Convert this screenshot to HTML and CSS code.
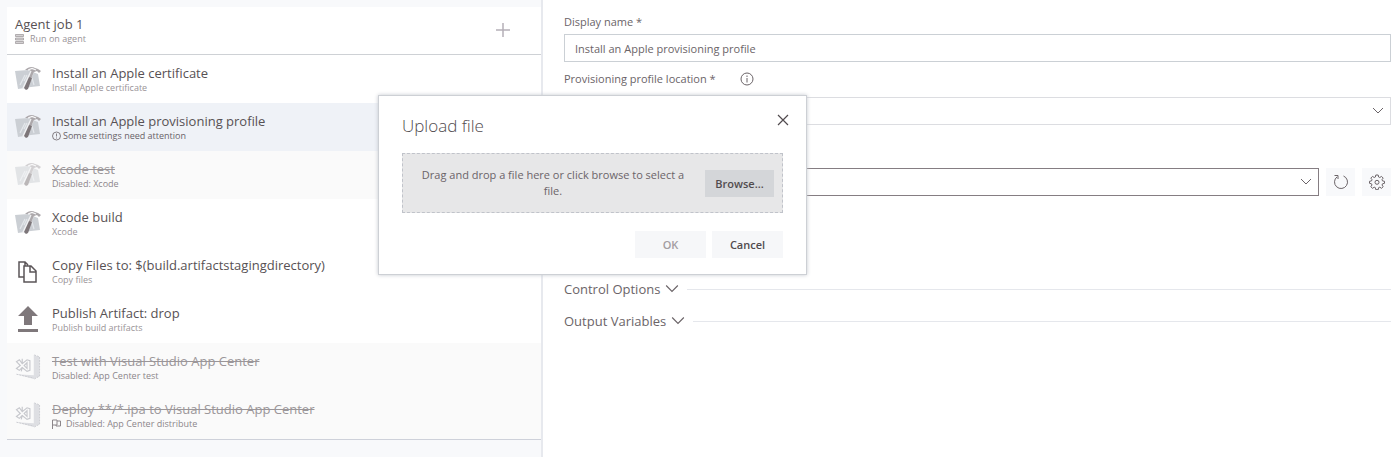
FILE: index.html
```html
<!DOCTYPE html>
<html lang="en">
<head>
<meta charset="utf-8">
<meta name="viewport" content="width=device-width, initial-scale=1">
<title>Agent job 1</title>
<link rel="stylesheet" href="styles.css">
</head>
<body>
<svg class="defs" aria-hidden="true">
  <symbol id="xcode" viewBox="0 0 26 26">
    <path d="M0 5 13 4 23 8 25 20 16 21 3 23Z" fill="#cbcfd4"/>
    <path d="M5 19 10 9M12 9 9 15M19 19 17 12" fill="none" stroke="#e4e7eb" stroke-width="1.200"/>
    <path d="M18 4 9 23" stroke="#f1f2f4" stroke-width="4"/>
    <path d="M18 5 15 12" stroke="#aca8ab" stroke-width="2.500"/>
    <path d="M14 11 17 12 13 23 11 24 9 22Z" fill="#7d7679"/>
    <path d="M10 4C13 1 17 0 20 2L23 3 26 5 24 7 22 5 19 6 16 5 14 4Z" fill="#aca8ab"/>
    <path d="M13 4 17 2.500 21 4" fill="none" stroke="#f8f8f9" stroke-width="1.200"/>
  </symbol>
  <symbol id="studio" viewBox="0 0 26 27">
    <path d="M19 1 25 3V23L19 26 1 21 19 22Z" fill="#dedfe3"/>
    <path d="M19.500 1 25 3V23L19.500 26M1 21 19 25" fill="none" stroke="#cbccd1" stroke-dasharray="2 1"/>
    <path d="M1 8 4 6 7 10 12 6 15 7V17L12 18 7 14 4 17 1 15 5 12ZM12 9 9 12 12 15ZM7 5V10M7 14 6 18" fill="none" stroke="#c7c8cd" stroke-width="1.200"/>
  </symbol>
  <symbol id="chevron" viewBox="0 0 12 12">
    <path d="M1 3 6 8 11 3" fill="none" stroke="currentColor"/>
  </symbol>
</svg>
<main class="layout">
  <section class="tasks">
    <div class="card">
      <header class="job">
        <div class="text">
          <h1 class="name">Agent job 1</h1>
          <p class="note"><svg class="mini server" viewBox="0 0 9 10" aria-hidden="true"><path d="M.5.5h8v2h-8zM.5 4h8v2h-8zM.5 7.500h8v2h-8z" fill="#d4d1d3" stroke="#999497" stroke-width=".7"/></svg>Run on agent</p>
        </div>
        <button class="add" aria-label="Add a task"><svg viewBox="0 0 16 16"><path d="M8 1v14M1 8h14" stroke="currentColor" stroke-width="1.500" fill="none"/></svg></button>
      </header>
      <ul class="list">
        <li class="task"><svg class="icon"><use href="#xcode"/></svg><div class="text"><h2 class="name">Install an Apple certificate</h2><p class="note">Install Apple certificate</p></div></li>
        <li class="task selected"><svg class="icon"><use href="#xcode"/></svg><div class="text"><h2 class="name">Install an Apple provisioning profile</h2><p class="note"><svg class="mini alert" viewBox="0 0 9 9" aria-hidden="true"><circle cx="4.500" cy="4.500" r="4" fill="none" stroke="currentColor" stroke-width=".8"/><path d="M4.500 2v3M4.500 6v1" stroke="currentColor" stroke-width=".8"/></svg>Some settings need attention</p></div></li>
        <li class="task disabled"><svg class="icon faded"><use href="#xcode"/></svg><div class="text"><h2 class="name">Xcode test</h2><p class="note">Disabled: Xcode</p></div></li>
        <li class="task"><svg class="icon"><use href="#xcode"/></svg><div class="text"><h2 class="name">Xcode build</h2><p class="note">Xcode</p></div></li>
        <li class="task"><svg class="icon" viewBox="0 0 26 26"><path d="M9 19H4V4h6l3 3M9 8h7l5 5v11H9zM15 8v6h6M10 4v4" fill="none" stroke="#5b5558" stroke-width="1.500"/></svg><div class="text"><h2 class="name">Copy Files to: $(build.artifactstagingdirectory)</h2><p class="note">Copy files</p></div></li>
        <li class="task"><svg class="icon" viewBox="0 0 26 26"><path d="M13 0 23 10H17V19H9V10H3ZM3 23H23V26H3Z" fill="#7f787b"/></svg><div class="text"><h2 class="name">Publish Artifact: drop</h2><p class="note">Publish build artifacts</p></div></li>
        <li class="task disabled"><svg class="icon"><use href="#studio"/></svg><div class="text"><h2 class="name">Test with Visual Studio App Center</h2><p class="note">Disabled: App Center test</p></div></li>
        <li class="task disabled"><svg class="icon"><use href="#studio"/></svg><div class="text"><h2 class="name">Deploy **/*.ipa to Visual Studio App Center</h2><p class="note"><svg class="mini flag" viewBox="0 0 9 10" aria-hidden="true"><path d="M.5 10V1H5V6H.5M5 2H8.500V7H4V6" fill="none" stroke="currentColor"/></svg>Disabled: App Center distribute</p></div></li>
      </ul>
    </div>
  </section>

  <section class="details">
    <label class="label" for="display-name">Display name *</label>
    <input class="field" id="display-name" type="text" value="Install an Apple provisioning profile">
    <div class="label-row">
      <label class="label" for="location">Provisioning profile location *</label>
      <svg class="info" viewBox="0 0 14 14" aria-hidden="true"><circle cx="7" cy="7" r="6" fill="none" stroke="currentColor"/><path d="M7 3.500V5M7 6v4.500" stroke="currentColor"/></svg>
    </div>
    <div class="picker">
      <select class="select" id="location"><option></option></select>
      <svg class="arrow"><use href="#chevron"/></svg>
    </div>
    <div class="file-row">
      <div class="picker">
        <select class="select strong" aria-label="Profile file"><option></option></select>
        <svg class="arrow"><use href="#chevron"/></svg>
      </div>
      <button class="tool" aria-label="Refresh"><svg viewBox="0 0 16 16"><path d="M10.500 2A6.500 6.500 0 1 1 4 2.900M1.500 1.500H5V5" fill="none" stroke="currentColor"/></svg></button>
      <button class="tool" aria-label="Settings"><svg viewBox="0 0 16 16"><path d="M6.800 1h2.400l.4 2 1.200.5 1.700-1.100 1.700 1.700-1.200 1.600.5 1.200 2 .4v2l-2 .5-.5 1.200 1.200 1.700-1.700 1.600-1.700-1.100-1.200.5-.4 2H6.800l-.4-2-1.200-.5-1.700 1.100-1.700-1.600L3 11l-.5-1.200-2-.5v-2l2-.4L3 5.700 1.800 4.100l1.700-1.700 1.700 1.100L6.400 3z" fill="none" stroke="currentColor"/><circle cx="8" cy="8.300" r="2" fill="none" stroke="currentColor"/></svg></button>
    </div>
    <div class="groups">
      <button class="group">Control Options<svg class="chevron"><use href="#chevron"/></svg></button>
      <button class="group">Output Variables<svg class="chevron"><use href="#chevron"/></svg></button>
    </div>
  </section>
</main>

<div class="dialog" role="dialog" aria-labelledby="dialog-title">
  <header class="dialog-head">
    <h2 class="dialog-title" id="dialog-title">Upload file</h2>
    <button class="close" aria-label="Close"><svg viewBox="0 0 12 12"><path d="M1 1 11 11M11 1 1 11" fill="none" stroke="currentColor" stroke-width="1.200"/></svg></button>
  </header>
  <div class="drop">
    <p class="drop-text">Drag and drop a file here or click browse to select a file.</p>
    <button class="button browse">Browse...</button>
  </div>
  <footer class="actions">
    <button class="button" disabled>OK</button>
    <button class="button">Cancel</button>
  </footer>
</div>
</body>
</html>
```
FILE: styles.css
```css
* { box-sizing: border-box; }
body, h1, h2, p, ul { margin: 0; padding: 0; }
body {
  font-family: "Open Sans", "Noto Sans", sans-serif;
  font-size: 11px;
  color: #6b6468;
  background: #fff;
}
button, input, select { font: inherit; color: inherit; border: 0; padding: 0; background: none; border-radius: 0; }
svg { display: block; flex: none; }
.defs { position: absolute; width: 0; height: 0; }

.layout { display: grid; grid-template-columns: 543px 1fr; min-height: 100vh; }
.tasks { padding: 7px 0 0 7px; background: #f8f9fb; border-right: 2px solid #e7e9ee; }
.card { background: #fff; border-bottom: 1px solid #ced1da; }
.job { display: flex; justify-content: space-between; align-items: center; height: 48px; padding: 0 30px 2px 8px; border-bottom: 1px solid #ced1d5; }
.add { width: 16px; height: 16px; color: #b5b0b8; }
.list { list-style: none; }
.task { display: flex; align-items: center; gap: 11px; height: 48px; padding: 0 0 1px 8px; }
.icon { width: 26px; height: 26px; }
.faded { opacity: .5; }
.name { font-size: 13px; line-height: 18px; font-weight: 400; color: #575154; }
.note { display: flex; align-items: center; font-size: 9px; line-height: 12px; color: #999397; }
.mini { width: 9px; height: 10px; }
.server { margin-right: 6px; }
.alert { margin-right: 2px; }
.flag { margin-right: 5px; }
.selected { background: #eff2f7; }
.selected .note { color: #696267; }
.disabled { background: #fafafa; }
.disabled .name { color: #9b9699; text-decoration: line-through; }
.disabled .note { color: #8c868a; }

.details { padding: 14px 9px 0 21px; }
.label { display: block; line-height: 16px; }
.field { display: block; width: 100%; height: 28px; margin-top: 4px; padding: 0 10px; border: 1px solid #cbd0d5; }
.label-row { display: flex; align-items: center; gap: 24px; margin: 9px 0 10px; }
.info { width: 14px; height: 14px; }
.picker { display: grid; align-items: center; flex: 1; }
.select { grid-area: 1 / 1; width: 100%; height: 28px; appearance: none; border: 1px solid #dcdde1; }
.strong { border-color: #857d82; }
.arrow { grid-area: 1 / 1; justify-self: end; width: 12px; height: 12px; margin-right: 7px; pointer-events: none; }
.file-row { display: flex; gap: 7px; margin-top: 43px; }
.tool { display: grid; place-items: center; width: 29px; height: 28px; background: #f8f9fb; }
.tool svg { width: 16px; height: 16px; }
.groups { display: grid; gap: 12px; margin-top: 83px; }
.group { display: flex; align-items: center; font-size: 13px; line-height: 20px; }
.group::after { content: ""; flex: 1; height: 1px; margin-left: 8px; background: #e5e7ec; }
.chevron { width: 14px; height: 14px; margin-left: 5px; }

.dialog { position: absolute; left: 378px; top: 95px; width: 429px; padding: 16px 23px; background: #fff; border: 1px solid #cdd0d5; box-shadow: 0 0 4px #c5c8cf; }
.dialog-head { display: flex; justify-content: space-between; align-items: center; margin-right: -6px; }
.dialog-title { font-size: 17px; line-height: 28px; font-weight: 300; color: #514b4e; }
.close { width: 12px; height: 12px; margin-bottom: 12px; color: #514b4e; }
.close svg { width: 12px; height: 12px; }
.drop { display: flex; align-items: center; gap: 16px; height: 60px; margin-top: 13px; padding: 0 8px 0 14px; background: #e7e7e8; border: 1px dashed #c0c3ca; }
.drop-text { flex: 1; line-height: 16px; text-align: center; }
.button { width: 71px; height: 27px; font-weight: 600; color: #514b4e; background: #f6f7f9; }
.button:disabled { color: #a39da1; }
.browse { width: 69px; background: #d4d6d9; }
.actions { display: flex; justify-content: flex-end; gap: 6px; margin-top: 18px; }
```
